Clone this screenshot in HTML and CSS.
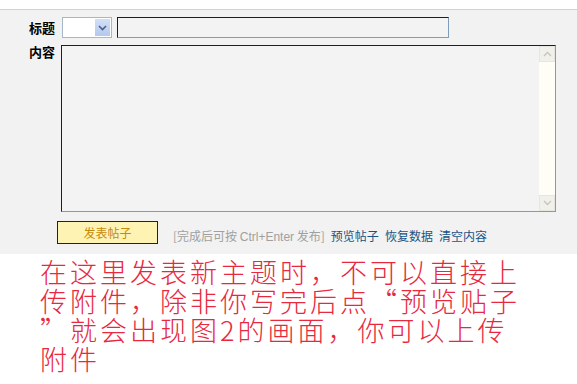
FILE: index.html
```html
<!DOCTYPE html>
<html lang="zh-CN">
<head>
    <meta charset="UTF-8">
    <meta name="viewport" content="width=device-width, initial-scale=1.0">
    <title>发表新主题</title>
    <link rel="stylesheet" href="styles.css">
</head>
<body>
    <div class="postbox">
        <div class="row">
            <label class="lbl">标题</label>
            <div class="select">
                <span class="select-btn">
                    <svg width="9" height="6" viewBox="0 0 9 6"><path d="M1 1 L4.5 4.5 L8 1" fill="none" stroke="#4d6185" stroke-width="1.6"/></svg>
                </span>
            </div>
            <div class="field title-field"></div>
        </div>

        <div class="row content-row">
            <label class="lbl">内容</label>
            <div class="field textarea">
                <div class="scrollbar">
                    <span class="sb-btn">
                        <svg width="9" height="6" viewBox="0 0 9 6"><path d="M1 5 L4.5 1.5 L8 5" fill="none" stroke="#c6c6bc" stroke-width="1.4"/></svg>
                    </span>
                    <span class="sb-track"></span>
                    <span class="sb-btn">
                        <svg width="9" height="6" viewBox="0 0 9 6"><path d="M1 1 L4.5 4.5 L8 1" fill="none" stroke="#c6c6bc" stroke-width="1.4"/></svg>
                    </span>
                </div>
            </div>
        </div>

        <div class="row actions">
            <button class="submit">发表帖子</button>
            <span class="hint">[完成后可按 <span class="en">Ctrl+Enter</span> 发布]</span>
            <a href="#" class="link">预览帖子</a>
            <a href="#" class="link">恢复数据</a>
            <a href="#" class="link">清空内容</a>
        </div>
    </div>

    <p class="note">在这里发表新主题时，不可以直接上<br>传附件，除非你写完后点“预览贴子<br>”就会出现图2的画面，你可以上传<br>附件</p>
</body>
</html>
```

FILE: styles.css
```css
body {
    margin: 0;
    background-color: #fff;
    font-family: "Noto Sans CJK SC", sans-serif;
    font-size: 12px;
}
.postbox {
    margin-top: 9px;
    height: 245px;
    box-sizing: border-box;
    padding-top: 7px;
    background-color: #f2f2f2;
    border-top: 1px solid #c9d5de;
}
.row {
    display: flex;
    align-items: flex-start;
}
.lbl {
    width: 55px;
    padding-right: 7px;
    text-align: right;
    font-size: 13px;
    font-weight: bold;
    line-height: 21px;
    color: #000;
}
.select {
    width: 50px;
    height: 21px;
    box-sizing: border-box;
    border: 1px solid #a5b8c8;
    background-color: #fff;
    display: flex;
    justify-content: flex-end;
    padding: 1px;
}
.select-btn {
    width: 15px;
    display: flex;
    align-items: center;
    justify-content: center;
    background: linear-gradient(180deg, #d3e0f7, #b3c8ee);
}
.field {
    box-sizing: border-box;
    border-style: solid;
    border-width: 1px;
    border-color: #1e1e1e #7f9db9 #7f9db9 #1e1e1e;
    background-color: #f3f3f3;
}
.title-field {
    width: 332px;
    height: 21px;
    margin-left: 5px;
}
.content-row {
    margin-top: 7px;
}
.content-row .lbl {
    line-height: 13px;
}
.textarea {
    width: 495px;
    height: 167px;
    margin-left: -1px;
    display: flex;
    justify-content: flex-end;
}
.scrollbar {
    width: 16px;
    display: flex;
    flex-direction: column;
    background-color: #fefef6;
}
.sb-btn {
    height: 16px;
    display: flex;
    align-items: center;
    justify-content: center;
    background-color: #f1f1eb;
    border: 1px solid #e6e6de;
    box-sizing: border-box;
}
.sb-track {
    flex: 1;
}
.actions {
    margin-top: 8px;
    padding-left: 57px;
    align-items: center;
}
.submit {
    width: 101px;
    height: 23px;
    padding: 0;
    background-color: #fff3b3;
    border: 1px solid #222;
    color: #c58a0c;
    font-family: "Noto Sans CJK SC", sans-serif;
    font-size: 12px;
}
.hint {
    margin-left: 15px;
    margin-top: 7px;
    color: #a0a0a0;
}
.hint .en {
    font-family: "Liberation Sans", Arial, sans-serif;
}
.link {
    margin-left: 6px;
    margin-top: 7px;
    color: #1a5385;
    text-decoration: none;
}
.note {
    margin: 3px 0 0 40px;
    font-family: "Noto Sans CJK SC", serif;
    font-weight: 300;
    font-size: 27px;
    letter-spacing: 3px;
    line-height: 29px;
    color: #e8283e;
}
```
